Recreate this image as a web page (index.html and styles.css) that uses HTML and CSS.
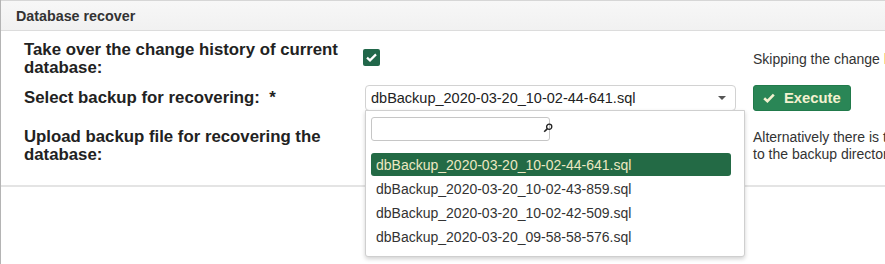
FILE: index.html
```html
<!DOCTYPE html>
<html lang="en">
<head>
    <meta charset="UTF-8">
    <title>Database recover</title>
    <link rel="stylesheet" href="styles.css">
</head>
<body>
    <div class="page">
        <div class="panel">
            <div class="panel-header">Database recover</div>

            <div class="panel-body">
                <div class="row row-history">
                    <label class="row-label">Take over the change history of current database:</label>
                    <div class="row-field">
                        <span class="checkbox">
                            <svg width="11" height="9" viewBox="0 0 11 9"><path d="M1 4.6 L4 7.4 L10 1.4" fill="none" stroke="#fff" stroke-width="2.2"/></svg>
                        </span>
                    </div>
                    <div class="row-hint">Skipping the change <span class="hint-link">history</span> may speed up the recovery</div>
                </div>

                <div class="row row-select">
                    <label class="row-label">Select backup for recovering: &nbsp;*</label>
                    <div class="row-field">
                        <div class="select">
                            <span class="select-value">dbBackup_2020-03-20_10-02-44-641.sql</span>
                            <span class="select-arrow"></span>

                            <div class="dropdown">
                                <div class="dropdown-search">
                                    <input type="text" class="search-input">
                                    <svg class="search-icon" width="10" height="10" viewBox="0 0 10 10">
                                        <circle cx="6.2" cy="3.8" r="2.6" fill="none" stroke="#222" stroke-width="1.3"/>
                                        <path d="M4.4 5.6 L1.2 8.8" stroke="#222" stroke-width="1.6"/>
                                    </svg>
                                </div>
                                <ul class="options">
                                    <li class="option active">dbBackup_2020-03-20_10-02-44-641.sql</li>
                                    <li class="option">dbBackup_2020-03-20_10-02-43-859.sql</li>
                                    <li class="option">dbBackup_2020-03-20_10-02-42-509.sql</li>
                                    <li class="option">dbBackup_2020-03-20_09-58-58-576.sql</li>
                                </ul>
                            </div>
                        </div>
                    </div>
                    <div class="row-hint">
                        <button class="btn-execute">
                            <svg width="12" height="10" viewBox="0 0 12 10"><path d="M1.2 5.2 L4.4 8.2 L10.8 1.6" fill="none" stroke="#f4f1d0" stroke-width="2.6"/></svg>
                            Execute
                        </button>
                    </div>
                </div>

                <div class="row row-upload">
                    <label class="row-label">Upload backup file for recovering the database:</label>
                    <div class="row-field"></div>
                    <div class="row-hint">Alternatively there is the possibility to copy the file<br>to the backup directory of the server</div>
                </div>
            </div>
        </div>
    </div>
</body>
</html>
```

FILE: styles.css
```css
html, body {
    margin: 0;
    padding: 0;
    height: 100%;
    overflow: hidden;
    background: #ffffff;
}

.page {
    height: 100%;
    border-left: 1px solid #b4b4b4;
    font-family: "Liberation Sans", Arial, sans-serif;
    color: #222222;
}

.panel {
    width: 1100px;
    border-top: 1px solid #d6d6d6;
    border-bottom: 2px solid #e4e4e4;
}

.panel-header {
    height: 29px;
    line-height: 30px;
    padding-left: 15px;
    font-size: 14.3px;
    font-weight: bold;
    color: #333333;
    background: linear-gradient(#f7f7f7, #f1f1f1);
    border-bottom: 1px solid #dcdcdc;
}

.panel-body {
    padding: 10px 0 21px 23px;
}

.row {
    display: flex;
    align-items: center;
}

.row-label {
    width: 339px;
    font-size: 16.8px;
    font-weight: bold;
    line-height: 18px;
}

.row-field {
    width: 373px;
}

.row-hint {
    padding-left: 17px;
    font-size: 14px;
    line-height: 17px;
    color: #333333;
    white-space: nowrap;
}

.hint-link {
    color: #e8a24a;
}

.row-select {
    margin-top: 8px;
}

.row-upload {
    margin-top: 17px;
}

.checkbox {
    display: flex;
    align-items: center;
    justify-content: center;
    width: 17px;
    height: 17px;
    margin-top: -3px;
    border-radius: 2px;
    background: #21674a;
}

.select {
    position: relative;
    display: flex;
    align-items: center;
    height: 24px;
    margin-left: 2px;
    padding: 0 9px 0 5px;
    border: 1px solid #d2d2d2;
    border-radius: 4px;
    font-size: 14.5px;
    color: #222222;
}

.select-value {
    flex: 1;
}

.select-arrow {
    width: 0;
    height: 0;
    border-left: 4px solid transparent;
    border-right: 4px solid transparent;
    border-top: 4px solid #555555;
}

.btn-execute {
    display: flex;
    align-items: center;
    gap: 9px;
    width: 98px;
    height: 26px;
    padding: 0 0 0 9px;
    border: 1px solid #217a4b;
    border-radius: 3px;
    background: #2a8656;
    font-family: "Liberation Sans", Arial, sans-serif;
    font-size: 14.8px;
    font-weight: bold;
    color: #f4f1d0;
}

/* opened select list */
.dropdown {
    position: absolute;
    top: 24px;
    left: -1px;
    width: 378px;
    height: 145px;
    background: #ffffff;
    border: 1px solid #cfcfcf;
    border-radius: 0 0 3px 3px;
    box-shadow: 0 2px 4px rgba(0, 0, 0, 0.18);
    z-index: 5;
}

.dropdown-search {
    position: relative;
    margin: 6px 0 0 5px;
    width: 179px;
}

.search-input {
    display: block;
    box-sizing: border-box;
    width: 179px;
    height: 24px;
    border: 1px solid #c6c6c6;
    border-radius: 3px;
    outline: none;
}

.search-icon {
    position: absolute;
    right: -3px;
    top: 6px;
}

.options {
    list-style: none;
    margin: 12px 0 0 5px;
    padding: 0;
    width: 360px;
}

.option {
    height: 24px;
    line-height: 25px;
    padding-left: 5px;
    font-size: 14px;
    color: #333333;
}

.option.active {
    height: 23px;
    margin-bottom: 1px;
    border-radius: 3px;
    background: #236a45;
    color: #ece8c2;
}
```
